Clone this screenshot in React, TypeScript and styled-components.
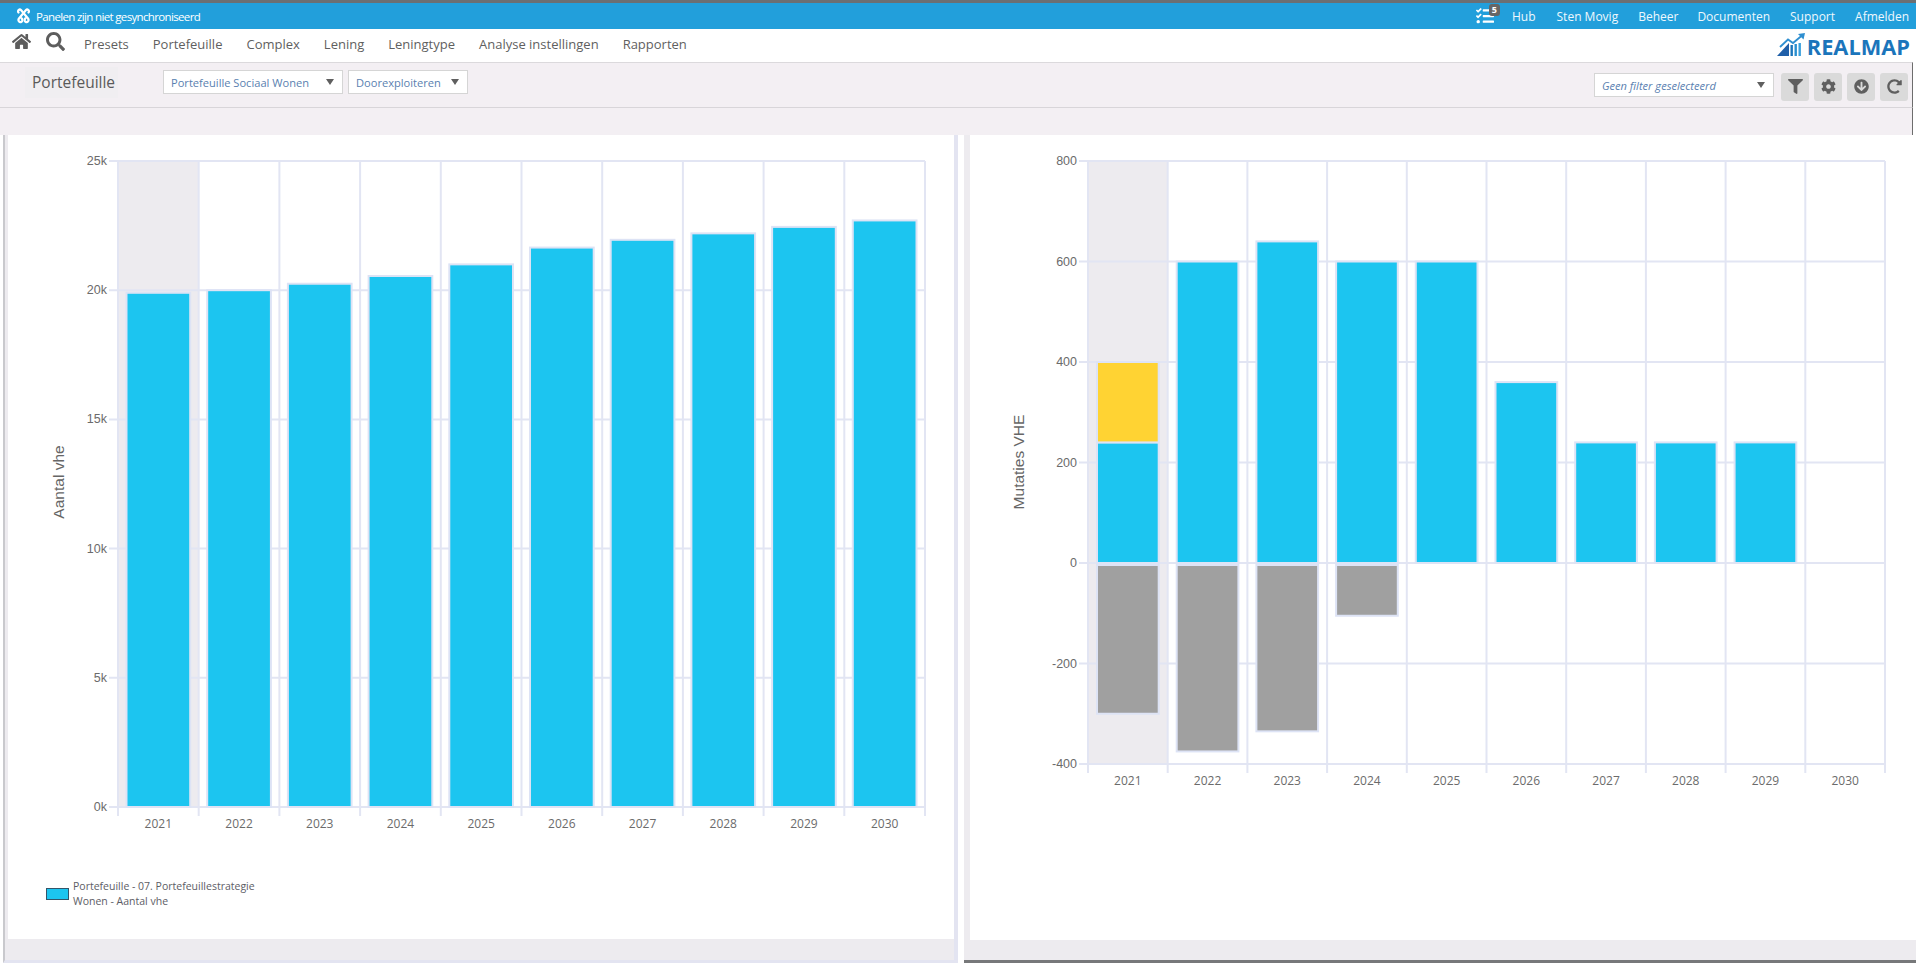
import React from "react";
import styled, { createGlobalStyle } from "styled-components";
import { FaHome, FaSearch, FaFilter, FaCog, FaArrowCircleDown, FaRedoAlt, FaTasks } from "react-icons/fa";

const Global = createGlobalStyle`
  html, body { margin: 0; padding: 0; height: 100%; background: #fff; overflow: hidden; }
  body { font-family: "Open Sans", "Liberation Sans", sans-serif; }
`;

const Page = styled.div`
  width: 1916px;
  height: 963px;
  display: flex;
  flex-direction: column;
  overflow: hidden;
`;

const BlueBar = styled.header`
  height: 26px;
  flex: none;
  box-sizing: content-box;
  border-top: 3px solid #6b6f73;
  background: #229fdb;
  color: #fff;
  display: flex;
  align-items: center;
  justify-content: space-between;
  padding: 0 7px 0 16px;
  font-size: 12px;
`;

const SyncNote = styled.div`
  display: flex;
  align-items: center;
  gap: 5px;
  font-size: 11.5px;
  letter-spacing: -0.65px;
`;

const TopLinks = styled.nav`
  display: flex;
  align-items: center;
`;

const TopLink = styled.span<{ $left: number }>`
  margin-left: ${(p) => p.$left}px;
  font-size: 12px;
  color: #eef8fd;
`;

const TaskIcon = styled.span`
  position: relative;
  display: flex;
  color: #fff;
  font-size: 18px;
  margin-right: 7px;
`;

const TaskBadge = styled.span`
  position: absolute;
  top: -3px;
  right: -6px;
  background: #666;
  color: #fff;
  font-size: 9px;
  font-weight: 700;
  line-height: 12px;
  padding: 0 3px;
  border-radius: 3px;
`;

const NavBar = styled.div`
  height: 33px;
  flex: none;
  background: #fff;
  display: flex;
  align-items: center;
  justify-content: space-between;
  padding: 0 6px 0 12px;
`;

const NavLeft = styled.div`
  display: flex;
  align-items: center;
`;

const NavIcon = styled.span<{ $left?: number }>`
  display: flex;
  color: #5d5d5d;
  font-size: 19px;
  margin-left: ${(p) => p.$left ?? 0}px;
  margin-top: -8px;
`;

const NavItems = styled.div`
  display: flex;
  align-items: center;
  gap: 24px;
  margin-left: 19px;
  margin-top: -3px;
`;

const NavItem = styled.span`
  font-size: 13px;
  color: #5f5f5f;
`;

const Logo = styled.div`
  display: flex;
  align-items: flex-end;
  color: #1b75bb;
  font-family: "Open Sans", sans-serif;
  font-weight: 700;
  font-size: 21.8px;
  line-height: 20px;
  margin-top: -2px;
`;

const Toolbar = styled.div`
  height: 44px;
  flex: none;
  background: #f3eff3;
  border-top: 1px solid #dbd9dc;
  border-bottom: 1px solid #d8d5d9;
  border-right: 1px solid #6d6d6d;
  margin-right: 3px;
  display: flex;
  align-items: center;
  justify-content: space-between;
  padding: 0 4px 0 25px;
`;

const LeftGroup = styled.div`
  display: flex;
  align-items: center;
  margin-top: -6px;
`;

const RightGroup = styled.div`
  display: flex;
  align-items: center;
`;

const Title = styled.div`
  width: 93px;
  height: 31px;
  box-sizing: border-box;
  padding-left: 7px;
  display: flex;
  align-items: center;
  font-size: 15.5px;
  color: #5a5a5a;
  background: #f0eef1;
  margin-right: 45px;
  white-space: nowrap;
`;

const Select = styled.div<{ $width: number; $italic?: boolean }>`
  width: ${(p) => p.$width}px;
  height: 24px;
  box-sizing: border-box;
  background: #fff;
  border: 1px solid #d5d5d5;
  display: flex;
  align-items: center;
  justify-content: space-between;
  padding: 0 7px;
  font-size: 11.1px;
  color: #5a7fb0;
  font-style: ${(p) => (p.$italic ? "italic" : "normal")};
  margin-right: ${(p) => (p.$italic ? 2 : 5)}px;
`;

const Caret = styled.span`
  width: 0;
  height: 0;
  border-left: 4px solid transparent;
  border-right: 4px solid transparent;
  border-top: 6px solid #5f5f5f;
  margin-right: 1px;
`;

const IconButton = styled.div`
  width: 28px;
  height: 28px;
  margin-left: 5px;
  margin-top: 3px;
  border-radius: 3px;
  background: #dadada;
  color: #5f5f5f;
  display: flex;
  align-items: center;
  justify-content: center;
  font-size: 15px;
`;

const SubBar = styled.div`
  height: 27px;
  flex: none;
  background: #f3eff3;
  border-right: 1px solid #6d6d6d;
  margin-right: 3px;
`;

const Workspace = styled.main`
  flex: 1;
  min-height: 0;
  display: flex;
  background: #fff;
`;

const LeftPanel = styled.section`
  width: 951px;
  margin-left: 3px;
  border-left: 2px solid #c9c9cd;
  border-right: 4px solid #e3e4f1;
  border-bottom: 3px solid #e3e4f1;
  background: #edebef;
  padding: 0 0 21px 3px;
  display: flex;
`;

const RightPanel = styled.section`
  width: 952px;
  margin-left: 6px;
  border-bottom: 3px solid #77787a;
  background: #edebef;
  padding: 0 0 20px 6px;
  display: flex;
`;

const PanelBody = styled.div`
  flex: 1;
  background: #fff;
  min-width: 0;
  display: flex;
  flex-direction: column;
`;

const Legend = styled.div`
  display: flex;
  align-items: center;
  gap: 4px;
  padding-left: 38px;
  margin-top: 9px;
  color: #5d5d66;
  font-size: 10.5px;
  line-height: 14.5px;
`;

const Swatch = styled.span`
  width: 23px;
  height: 12px;
  box-sizing: border-box;
  background: #1cc5f0;
  border: 1px solid #33556a;
`;

const ChartSvg = styled.svg`
  display: block;
  flex: none;
`;

const TickLabel = styled.text`
  font-family: "Liberation Sans", Arial, sans-serif;
  font-size: 12.5px;
  fill: #6b6b6b;
`;

const YearLabel = styled.text`
  font-family: "Open Sans", "Liberation Sans", sans-serif;
  font-size: 12px;
  fill: #6b6b6b;
`;

const AxisTitle = styled.text`
  font-family: "Liberation Sans", Arial, sans-serif;
  font-size: 15.5px;
  fill: #666;
`;

const LINE = "#e2e5f3";
const EDGE = "#dde3f5";
const BLUE = "#1cc5f0";
const YELLOW = "#ffd333";
const GREY = "#a0a0a0";

const YEARS = [2021, 2022, 2023, 2024, 2025, 2026, 2027, 2028, 2029, 2030];
const NAV = ["Presets", "Portefeuille", "Complex", "Lening", "Leningtype", "Analyse instellingen", "Rapporten"];

type Segment = { from: number; to: number; color: string; gap?: number };

type ChartProps = {
  box: [number, number, number, number];
  left: number;
  right: number;
  top: number;
  bottom: number;
  min: number;
  max: number;
  step: number;
  inset: number;
  format: (v: number) => string;
  title: string;
  titleX: number;
  titleY: number;
  data: Segment[][];
};

function BarChart({ box, left, right, top, bottom, min, max, step, inset, format, title, titleX, titleY, data }: ChartProps) {
  const slot = (right - left) / 10;
  const y = (v: number) => bottom - ((v - min) / (max - min)) * (bottom - top);
  const ticks: number[] = [];
  for (let v = min; v <= max; v += step) ticks.push(v);
  return (
    <ChartSvg width={box[2]} height={box[3]} viewBox={box.join(" ")}>
      <rect x={left} y={top} width={slot} height={bottom - top} fill="#edebef" />
      {ticks.map((v) => (
        <line key={v} x1={left - 9} x2={right} y1={y(v)} y2={y(v)} stroke={LINE} strokeWidth={2} />
      ))}
      {Array.from({ length: 11 }, (_, i) => (
        <line key={i} x1={left + i * slot} x2={left + i * slot} y1={top} y2={bottom + 9} stroke={LINE} strokeWidth={2} />
      ))}
      {data.map((segments, i) =>
        segments.map((s, j) => {
          const yTop = y(Math.max(s.from, s.to));
          const yBottom = y(Math.min(s.from, s.to));
          return (
            <rect
              key={j}
              x={left + i * slot + inset}
              y={yTop + (s.gap ?? 0)}
              width={slot - inset * 2}
              height={yBottom - yTop - (s.gap ?? 0)}
              fill={s.color}
              stroke={EDGE}
              strokeWidth={2}
            />
          );
        })
      )}
      {ticks.map((v) => (
        <TickLabel key={v} x={left - 11} y={y(v) + 4} textAnchor="end">
          {format(v)}
        </TickLabel>
      ))}
      {YEARS.map((yr, i) => (
        <YearLabel key={yr} x={left + (i + 0.5) * slot} y={bottom + 21} textAnchor="middle">
          {yr}
        </YearLabel>
      ))}
      <AxisTitle x={titleX} y={titleY} textAnchor="middle" transform={`rotate(-90 ${titleX} ${titleY})`}>
        {title}
      </AxisTitle>
    </ChartSvg>
  );
}

const portfolio = [19900, 20000, 20250, 20550, 21000, 21650, 21950, 22200, 22450, 22700];
const leftData: Segment[][] = portfolio.map((v) => [{ from: 0, to: v, color: BLUE }]);

const mutations: [number, number, number][] = [
  [240, 160, -300],
  [600, 0, -375],
  [640, 0, -335],
  [600, 0, -105],
  [600, 0, 0],
  [360, 0, 0],
  [240, 0, 0],
  [240, 0, 0],
  [240, 0, 0],
  [0, 0, 0],
];
const rightData: Segment[][] = mutations.map(([b, g, n]) => {
  const out: Segment[] = [];
  if (b) out.push({ from: 0, to: b, color: BLUE });
  if (g) out.push({ from: b, to: b + g, color: YELLOW });
  if (n) out.push({ from: 0, to: n, color: GREY, gap: 2 });
  return out;
});

const SyncIcon = () => (
  <svg width="15" height="16" viewBox="0 0 15 16" fill="none" stroke="#fff" strokeWidth="2.2" strokeLinecap="round">
    <path d="M2.5 4.5 C1 3 3.5 0.5 5 2 L12 10.5 C13.5 12.5 11.5 15 9.5 13.8 C8.3 13 8.5 11.5 9.2 10.5" />
    <path d="M12.5 4.5 C14 3 11.5 0.5 10 2 L3 10.5 C1.5 12.5 3.5 15 5.5 13.8 C6.7 13 6.5 11.5 5.8 10.5" />
  </svg>
);

const LogoMark = () => (
  <svg width="30" height="25" viewBox="0 0 30 25">
    <path d="M0 24 L12 11 L12 24 Z" fill="#1f5fa8" />
    <rect x="13.5" y="13" width="2.4" height="11" fill="#1b75bb" />
    <rect x="17.5" y="12" width="2.4" height="12" fill="#2a8fd0" />
    <rect x="21.5" y="11" width="2.4" height="13" fill="#3a9fdc" />
    <path d="M3 15 L11 7.5 L16 11 L25 3.5" fill="none" stroke="#2f8fd0" strokeWidth="1.8" />
    <path d="M21 2 L28 1 L26.5 7.5 Z" fill="#2f8fd0" />
  </svg>
);

export default function App() {
  return (
    <Page>
      <Global />
      <BlueBar>
        <SyncNote>
          <SyncIcon />
          Panelen zijn niet gesynchroniseerd
        </SyncNote>
        <TopLinks>
          <TaskIcon>
            <FaTasks />
            <TaskBadge>5</TaskBadge>
          </TaskIcon>
          <TopLink $left={11}>Hub</TopLink>
          <TopLink $left={21}>Sten Movig</TopLink>
          <TopLink $left={20}>Beheer</TopLink>
          <TopLink $left={19}>Documenten</TopLink>
          <TopLink $left={20}>Support</TopLink>
          <TopLink $left={20}>Afmelden</TopLink>
        </TopLinks>
      </BlueBar>
      <NavBar>
        <NavLeft>
          <NavIcon><FaHome /></NavIcon>
          <NavIcon $left={15}><FaSearch /></NavIcon>
          <NavItems>
            {NAV.map((n) => (
              <NavItem key={n}>{n}</NavItem>
            ))}
          </NavItems>
        </NavLeft>
        <Logo>
          <LogoMark />
          REALMAP
        </Logo>
      </NavBar>
      <Toolbar>
        <LeftGroup>
          <Title>Portefeuille</Title>
          <Select $width={180}>Portefeuille Sociaal Wonen<Caret /></Select>
          <Select $width={120}>Doorexploiteren<Caret /></Select>
        </LeftGroup>
        <RightGroup>
          <Select $width={180} $italic>Geen filter geselecteerd<Caret /></Select>
          <IconButton><FaFilter /></IconButton>
          <IconButton><FaCog /></IconButton>
          <IconButton><FaArrowCircleDown /></IconButton>
          <IconButton><FaRedoAlt /></IconButton>
        </RightGroup>
      </Toolbar>
      <SubBar />
      <Workspace>
        <LeftPanel>
          <PanelBody>
            <BarChart
              box={[8, 135, 946, 735]}
              left={118}
              right={925}
              top={161}
              bottom={807}
              min={0}
              max={25000}
              step={5000}
              inset={8.5}
              format={(v) => `${v / 1000}k`}
              title="Aantal vhe"
              titleX={64}
              titleY={482}
              data={leftData}
            />
            <Legend>
              <Swatch />
              <span>
                Portefeuille - 07. Portefeuillestrategie
                <br />
                Wonen - Aantal vhe
              </span>
            </Legend>
          </PanelBody>
        </LeftPanel>
        <RightPanel>
          <PanelBody>
            <BarChart
              box={[970, 135, 946, 800]}
              left={1088}
              right={1885}
              top={161}
              bottom={764}
              min={-400}
              max={800}
              step={200}
              inset={9}
              format={(v) => `${v}`}
              title="Mutaties VHE"
              titleX={1024}
              titleY={462}
              data={rightData}
            />
          </PanelBody>
        </RightPanel>
      </Workspace>
    </Page>
  );
}
